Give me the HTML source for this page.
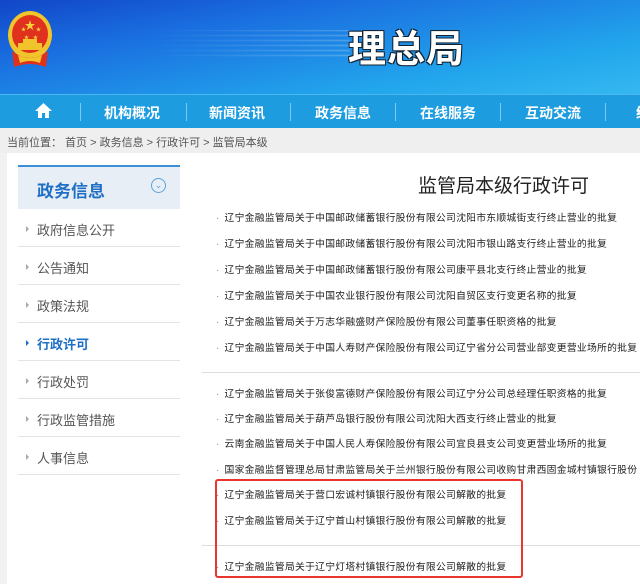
<!DOCTYPE html>
<html><head><meta charset="utf-8"><style>
*{margin:0;padding:0;box-sizing:border-box}
body{width:640px;height:584px;overflow:hidden;background:#f2f2f2;font-family:"Liberation Sans","Noto Sans CJK SC",sans-serif;position:relative}
.hdr{position:absolute;left:0;top:0;width:640px;height:94px;background:linear-gradient(170deg,#1146c8 0%,#1a6fe0 30%,#22a6ec 75%,#35b8f0 100%)}
.streak{position:absolute;left:150px;top:30px;width:200px;height:30px;background:repeating-linear-gradient(180deg,rgba(255,255,255,.35) 0 1px,transparent 1px 5px);-webkit-mask:linear-gradient(90deg,transparent,#000);filter:blur(0.6px)}
.ttl{position:absolute;left:348px;top:18px;font-size:38px;font-weight:bold;color:#fff;text-shadow:1px 1px 0 #123,-1px -1px 0 #123,1px -1px 0 #123,-1px 1px 0 #123;letter-spacing:1px}
.nav{position:absolute;left:0;top:94px;width:640px;height:34px;background:#1d9de0;border-top:1px solid #4bb7ee}
.nav span{position:absolute;top:8px;color:#fff;font-weight:bold;font-size:14px;transform:translateX(-50%);white-space:nowrap}
.nav i{position:absolute;top:8px;width:1px;height:18px;background:#7cc8f0}
.bc{position:absolute;left:0;top:128px;width:640px;height:25px;background:#efefef;font-size:11px;color:#555;padding:6px 0 0 7px}
.main{position:absolute;left:7px;top:153px;width:633px;height:431px;background:#fff}
.side{position:absolute;left:18px;top:165px;width:162px}
.st{height:44px;background:#e8eef5;border-top:2px solid #3b8fd8;position:relative}
.st b{position:absolute;left:19px;top:10px;font-size:17px;color:#1f6fc6}
.st u{position:absolute;left:133px;top:11px;width:15px;height:15px;border:1px solid #5aa4e0;border-radius:50%;text-decoration:none;color:#5aa4e0;font-size:9px;text-align:center;line-height:13px}
.si{height:38px;border-bottom:1px solid #e4e4e4;font-size:13px;color:#555;padding:11px 0 0 19px;position:relative}
.si:before{content:"";position:absolute;left:8px;top:17px;border:3px solid transparent;border-left:3px solid #aaa}
.si.on{color:#1f6fc6;font-weight:bold}
.si.on:before{border-left-color:#1f6fc6}
.h1{position:absolute;left:418px;top:171px;font-size:19px;color:#222}
.li{position:absolute;left:216px;font-size:9.8px;letter-spacing:0.27px;color:#222;white-space:nowrap}
.li:before{content:"·";color:#888;margin-right:5px}
.sep{position:absolute;left:202px;width:438px;height:1px;background:#ddd}
.red{position:absolute;left:215px;top:479px;width:308px;height:99px;border:2px solid #e8362f;border-radius:3px}
</style></head><body>
<div class="hdr">
<svg style="position:absolute;left:6px;top:9px" width="48" height="62" viewBox="0 0 48 62">
<ellipse cx="24" cy="26" rx="22" ry="24" fill="#f2c42c"/>
<ellipse cx="24" cy="25" rx="18" ry="19" fill="#e0301e"/>
<text x="24" y="20" font-size="11" fill="#f7d33b" text-anchor="middle">★</text>
<text x="15" y="22" font-size="5" fill="#f7d33b">★</text><text x="30" y="22" font-size="5" fill="#f7d33b">★</text>
<text x="18" y="30" font-size="5" fill="#f7d33b">★</text><text x="27" y="30" font-size="5" fill="#f7d33b">★</text>
<rect x="12" y="34" width="24" height="7" fill="#f2c42c"/><rect x="17" y="30" width="14" height="4" fill="#f2c42c"/>
<path d="M6 42 Q24 56 42 42 L40 58 Q24 52 8 58Z" fill="#e0301e"/>
<path d="M12 46 Q24 52 36 46 L34 54 Q24 50 14 54Z" fill="#f2c42c"/>
</svg>
<div class="streak"></div>
<div class="ttl">理总局</div>
</div>
<div class="nav">
<svg style="position:absolute;left:34px;top:7px" width="19" height="17" viewBox="0 0 19 17"><path d="M9.5 1 L18 9 H15 V16 H11 V11 H8 V16 H4 V9 H1Z" fill="#fff"/></svg>
<i style="left:80px"></i><span style="left:132px">机构概况</span>
<i style="left:186px"></i><span style="left:237px">新闻资讯</span>
<i style="left:290px"></i><span style="left:343px">政务信息</span>
<i style="left:395px"></i><span style="left:448px">在线服务</span>
<i style="left:500px"></i><span style="left:553px">互动交流</span>
<i style="left:605px"></i><span style="left:650px">统计</span>
</div>
<div class="bc">当前位置： 首页 &gt; 政务信息 &gt; 行政许可 &gt; 监管局本级</div>
<div class="main"></div>
<div class="side">
<div class="st"><b>政务信息</b><u>⌄</u></div>
<div class="si">政府信息公开</div><div class="si">公告通知</div><div class="si">政策法规</div>
<div class="si on">行政许可</div><div class="si">行政处罚</div><div class="si">行政监管措施</div><div class="si">人事信息</div>
</div>
<div class="h1">监管局本级行政许可</div>
<div class="li" style="top:210px">辽宁金融监管局关于中国邮政储蓄银行股份有限公司沈阳市东顺城街支行终止营业的批复</div>
<div class="li" style="top:236px">辽宁金融监管局关于中国邮政储蓄银行股份有限公司沈阳市银山路支行终止营业的批复</div>
<div class="li" style="top:262px">辽宁金融监管局关于中国邮政储蓄银行股份有限公司康平县北支行终止营业的批复</div>
<div class="li" style="top:288px">辽宁金融监管局关于中国农业银行股份有限公司沈阳自贸区支行变更名称的批复</div>
<div class="li" style="top:314px">辽宁金融监管局关于万志华融盛财产保险股份有限公司董事任职资格的批复</div>
<div class="li" style="top:340px">辽宁金融监管局关于中国人寿财产保险股份有限公司辽宁省分公司营业部变更营业场所的批复</div>
<div class="sep" style="top:372px"></div>
<div class="li" style="top:386px">辽宁金融监管局关于张俊富德财产保险股份有限公司辽宁分公司总经理任职资格的批复</div>
<div class="li" style="top:411px">辽宁金融监管局关于葫芦岛银行股份有限公司沈阳大西支行终止营业的批复</div>
<div class="li" style="top:436px">云南金融监管局关于中国人民人寿保险股份有限公司宜良县支公司变更营业场所的批复</div>
<div class="li" style="top:462px">国家金融监督管理总局甘肃监管局关于兰州银行股份有限公司收购甘肃西固金城村镇银行股份</div>
<div class="li" style="top:487px">辽宁金融监管局关于营口宏诚村镇银行股份有限公司解散的批复</div>
<div class="li" style="top:513px">辽宁金融监管局关于辽宁首山村镇银行股份有限公司解散的批复</div>
<div class="sep" style="top:545px"></div>
<div class="li" style="top:559px">辽宁金融监管局关于辽宁灯塔村镇银行股份有限公司解散的批复</div>
<div class="red"></div>
</body></html>
